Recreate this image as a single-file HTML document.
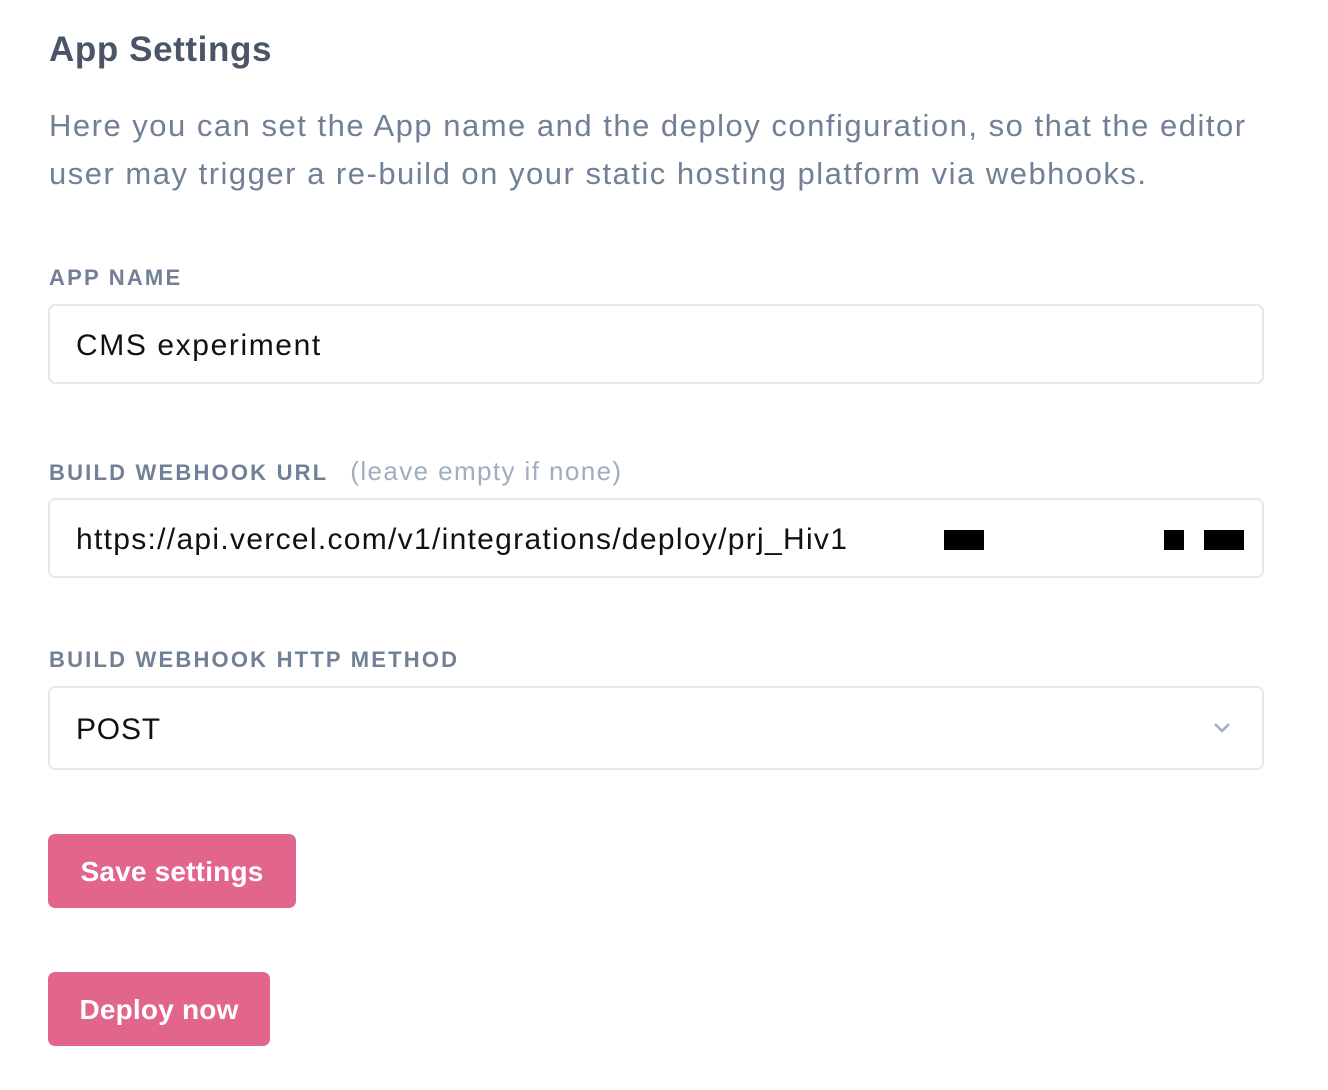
<!DOCTYPE html>
<html><head><meta charset="utf-8"><style>
*{margin:0;padding:0;box-sizing:border-box}
body{width:1328px;height:1090px;background:#fff;font-family:"Liberation Sans",sans-serif;position:relative;overflow:hidden}
.a{position:absolute;white-space:nowrap}
h1{position:absolute;left:49px;top:30px;font-size:35px;font-weight:bold;color:#4a5568;letter-spacing:0.6px}
.d{left:49px;font-size:31px;color:#718096;letter-spacing:1.5px}
.l{left:49px;font-size:22px;font-weight:bold;color:#718096;letter-spacing:2.2px}
.box{position:absolute;left:48px;width:1216px;border:2px solid #e2e8f0;border-radius:7px;background:#fff}
.t{position:absolute;left:26px;font-size:30px;color:#111;letter-spacing:1.6px}
.btn{position:absolute;left:48px;height:74px;background:#e2668c;border-radius:7px;color:#fff;font-size:28px;font-weight:bold;text-align:center;line-height:76px;letter-spacing:0.2px}
.blk{position:absolute;background:#000;height:20px;top:530px}
</style></head><body>
<h1>App Settings</h1>
<div class="a d" style="top:108px">Here you can set the App name and the deploy configuration, so that the editor</div>
<div class="a d" style="top:156px">user may trigger a re-build on your static hosting platform via webhooks.</div>
<div class="a l" style="top:265px">APP NAME</div>
<div class="box" style="top:304px;height:80px"><div class="t" style="top:23px">CMS experiment</div></div>
<div class="a l" style="top:456px">BUILD WEBHOOK URL <span style="font-weight:normal;color:#a0aec0;letter-spacing:1.4px;font-size:26px;margin-left:14px">(leave empty if none)</span></div>
<div class="box" style="top:498px;height:80px"><div class="t" style="top:23px;width:797px;overflow:hidden;letter-spacing:1.3px">https://api.vercel.com/v1/integrations/deploy/prj_Hiv1</div></div>
<div class="blk" style="left:944px;width:40px"></div>
<div class="blk" style="left:1164px;width:20px"></div>
<div class="blk" style="left:1204px;width:40px"></div>
<div class="a l" style="top:647px">BUILD WEBHOOK HTTP METHOD</div>
<div class="box" style="top:686px;height:84px"><div class="t" style="top:25px;letter-spacing:0.8px">POST</div>
<svg style="position:absolute;left:1162px;top:33px" width="20" height="14" viewBox="0 0 20 14"><path d="M3 3l7 7 7-7" fill="none" stroke="#a0aec0" stroke-width="2.5"/></svg></div>
<div class="btn" style="top:834px;width:248px">Save settings</div>
<div class="btn" style="top:972px;width:222px">Deploy now</div>
</body></html>
